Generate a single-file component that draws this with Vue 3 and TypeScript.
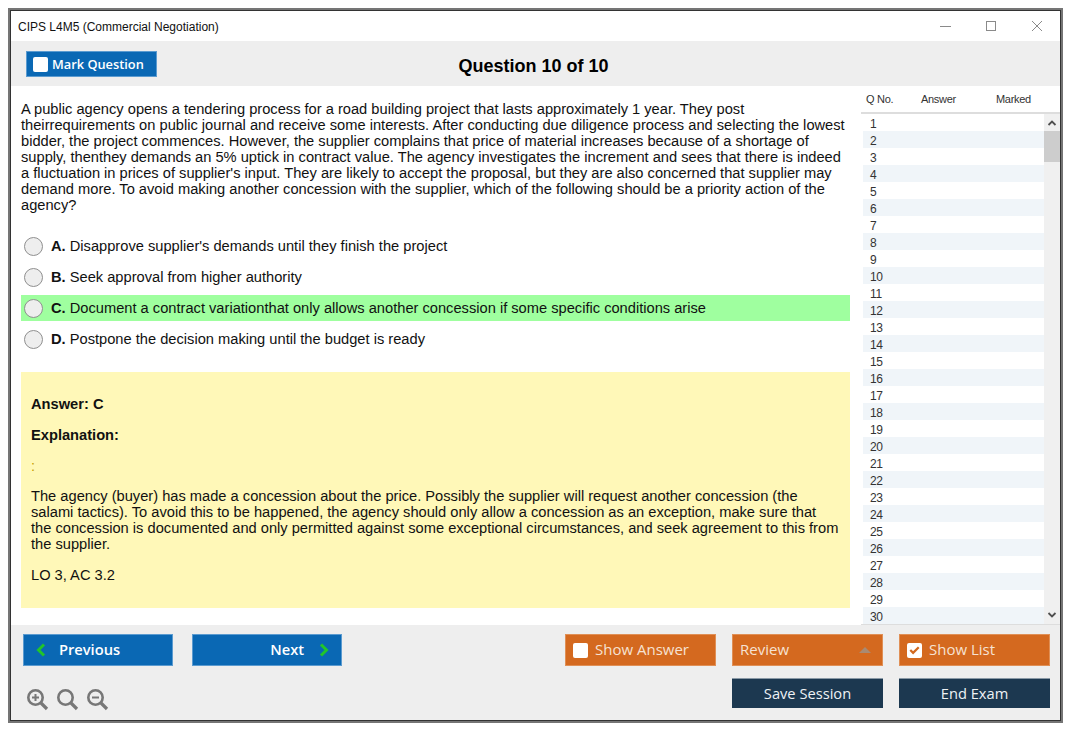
<script setup lang="ts">
const rows: number[] = Array.from({ length: 30 }, (_, i) => i + 1)
const options = [
  { key: 'A.', text: "Disapprove supplier's demands until they finish the project", ok: false },
  { key: 'B.', text: 'Seek approval from higher authority', ok: false },
  { key: 'C.', text: 'Document a contract variationthat only allows another concession if some specific conditions arise', ok: true },
  { key: 'D.', text: 'Postpone the decision making until the budget is ready', ok: false },
]
</script>

<template>
  <div class="win">
    <header class="titlebar">
      <span class="title">CIPS L4M5 (Commercial Negotiation)</span>
      <div class="controls">
        <svg width="12" height="12" viewBox="0 0 12 12"><path d="M1 6.500h11" stroke="#8a8a8a" fill="none" /></svg>
        <svg width="12" height="12" viewBox="0 0 12 12"><rect x="1.500" y="1.500" width="9" height="9" stroke="#8a8a8a" fill="none" /></svg>
        <svg width="12" height="12" viewBox="0 0 12 12"><path d="M1 1l10 10M11 1L1 11" stroke="#8a8a8a" fill="none" /></svg>
      </div>
    </header>

    <div class="toolbar">
      <button class="btn blue mark"><span class="box"></span>Mark Question</button>
      <h1 class="qtitle">Question 10 of 10</h1>
    </div>

    <div class="body">
      <main class="main">
        <p class="question">A public agency opens a tendering process for a road building project that lasts approximately 1 year. They post theirrequirements on public journal and receive some interests. After conducting due diligence process and selecting the lowest bidder, the project commences. However, the supplier complains that price of material increases because of a shortage of supply, thenthey demands an 5% uptick in contract value. The agency investigates the increment and sees that there is indeed a fluctuation in prices of supplier's input. They are likely to accept the proposal, but they are also concerned that supplier may demand more. To avoid making another concession with the supplier, which of the following should be a priority action of the agency?</p>
        <ul class="options">
          <li v-for="o in options" :key="o.key" class="option" :class="{ ok: o.ok }">
            <span class="radio"></span><b>{{ o.key }}</b>&nbsp;{{ o.text }}
          </li>
        </ul>
        <section class="answer">
          <p class="l1"><b>Answer: C</b></p>
          <p class="l2"><b>Explanation:</b></p>
          <p class="l2 colon">:</p>
          <p class="para">The agency (buyer) has made a concession about the price. Possibly the supplier will request another concession (the salami tactics). To avoid this to be happened, the agency should only allow a concession as an exception, make sure that the concession is documented and only permitted against some exceptional circumstances, and seek agreement to this from the supplier.</p>
          <p class="lo">LO 3, AC 3.2</p>
        </section>
      </main>

      <aside class="side">
        <div class="side-head"><span class="c1">Q No.</span><span class="c2">Answer</span><span class="c3">Marked</span></div>
        <div class="side-body">
          <div class="list">
            <div v-for="n in rows" :key="n" class="row" :class="{ alt: n % 2 === 0 }">{{ n }}</div>
          </div>
          <div class="scroll">
            <svg class="arrow" width="16" height="17" viewBox="0 0 16 17"><path d="M4.500 11L8 7.500l3.500 3.500" stroke="#505050" stroke-width="1.800" fill="none" /></svg>
            <div class="thumb"></div>
            <svg class="arrow bottom" width="16" height="16" viewBox="0 0 16 16"><path d="M4.500 6L8 9.500 11.500 6" stroke="#505050" stroke-width="1.800" fill="none" /></svg>
          </div>
        </div>
      </aside>
    </div>

    <footer class="footer">
      <div class="foot-left">
        <div class="nav">
          <button class="btn blue navbtn prev">
            <svg width="12" height="16" viewBox="0 0 12 16"><path d="M9 2.500L3.500 8 9 13.500" stroke="#22c52a" stroke-width="3" fill="none" /></svg>
            <span class="lift">Previous</span>
          </button>
          <button class="btn blue navbtn next">
            <span class="lift">Next</span>
            <svg width="12" height="16" viewBox="0 0 12 16"><path d="M3 2.500L8.500 8 3 13.500" stroke="#22c52a" stroke-width="3" fill="none" /></svg>
          </button>
        </div>
        <div class="zoom">
          <svg width="22" height="22" viewBox="0 0 22 22"><circle cx="8.500" cy="8.500" r="7.200" stroke="#777" stroke-width="2.600" fill="none" /><path d="M14 14L20 20" stroke="#777" stroke-width="3.200" /><path d="M5 8.500h7M8.500 5v7" stroke="#777" stroke-width="2" /></svg>
          <svg width="22" height="22" viewBox="0 0 22 22"><circle cx="8.500" cy="8.500" r="7.200" stroke="#777" stroke-width="2.600" fill="none" /><path d="M14 14L20 20" stroke="#777" stroke-width="3.200" /></svg>
          <svg width="22" height="22" viewBox="0 0 22 22"><circle cx="8.500" cy="8.500" r="7.200" stroke="#777" stroke-width="2.600" fill="none" /><path d="M14 14L20 20" stroke="#777" stroke-width="3.200" /><path d="M5 8.500h7" stroke="#777" stroke-width="2" /></svg>
        </div>
      </div>
      <div class="foot-right">
        <button class="btn orange"><span class="box"></span><span class="lift">Show Answer</span></button>
        <button class="btn orange review"><span class="lift">Review</span><span class="caret"></span></button>
        <button class="btn orange">
          <span class="box">
            <svg width="16" height="16" viewBox="0 0 16 16"><path d="M3.500 8l3 3 6-6" stroke="#d2691f" stroke-width="2.400" fill="none" /></svg>
          </span><span class="lift">Show List</span>
        </button>
        <span></span>
        <button class="btn navy"><span class="lift">Save Session</span></button>
        <button class="btn navy"><span class="lift">End Exam</span></button>
      </div>
    </footer>
  </div>
</template>

<style>
html, body { margin: 0; background: #fff; }
</style>

<style scoped>
.win {
  box-sizing: border-box;
  width: 1055px;
  height: 715px;
  margin: 8px 0 0 8px;
  border: 2px solid #757575;
  outline: 1px solid #333;
  outline-offset: -3px;
  padding: 1px;
  display: flex;
  flex-direction: column;
  background: #fff;
  font-family: "Liberation Sans", Arial, sans-serif;
  color: #111;
}
.titlebar {
  height: 30px;
  flex: none;
  display: flex;
  align-items: center;
  justify-content: space-between;
  padding-left: 7px;
}
.title { font-size: 12px; color: #111; position: relative; top: 1px; }
.controls { display: flex; gap: 34px; padding-right: 17px; }
.toolbar {
  height: 45px;
  flex: none;
  background: #eee;
  position: relative;
  display: flex;
  align-items: center;
  justify-content: center;
}
.qtitle {
  margin: 4px 4px 0 0;
  font-size: 18px;
  line-height: 22px;
  font-weight: bold;
  color: #000;
}
.btn {
  border: 0;
  padding: 0;
  margin: 0;
  color: #fff;
  font-family: "Open Sans", sans-serif;
  font-size: 14.670px;
  display: flex;
  align-items: center;
  box-sizing: border-box;
}
.lift { position: relative; top: -1px; }
.blue { background: #0a68b4; border: 1px solid #5b9bd0; }
.orange {
  background: #d4691f;
  color: #f6e2d3;
  width: 151px;
  height: 32px;
  padding-left: 7px;
  gap: 7px;
  font-size: 15px;
  border: 1px solid #e08f55;
}
.navy { background: #1c3850; color: #eef2f5; width: 151px; height: 30px; justify-content: center; border-top: 1px solid #8a99a6; }
.box {
  width: 15px;
  height: 15px;
  background: #fff;
  border-radius: 2px;
  display: inline-flex;
  align-items: center;
  justify-content: center;
  flex: none;
}
.mark {
  position: absolute;
  left: 15px;
  top: 10px;
  width: 131px;
  height: 26px;
  padding-left: 6px;
  gap: 4px;
  font-size: 12.800px;
  font-weight: 600;
}
.body { flex: 1; min-height: 0; display: flex; }
.main { flex: 1; min-width: 0; padding: 15px 11px 0 10px; font-size: 14.670px; }
.question { margin: 0; line-height: 16px; width: 829px; color: #111; }
.options { list-style: none; margin: 20px 0 0; padding: 0; }
.option {
  height: 26px;
  margin-bottom: 5px;
  display: flex;
  align-items: center;
  white-space: pre;
  color: #111;
}
.option.ok { background: #9fff9f; }
.radio {
  box-sizing: border-box;
  width: 19px;
  height: 19px;
  border-radius: 50%;
  border: 1px solid #8f8f8f;
  background: #eeeeee;
  margin: 0 8px 0 3px;
  flex: none;
}
.answer {
  margin-top: 20px;
  height: 236px;
  box-sizing: border-box;
  background: #fff8b8;
  padding: 24px 10px 0;
  line-height: 16px;
}
.answer p { margin: 0; }
.l2 { margin-top: 15px !important; }
.colon { color: #c8a000; }
.para { margin-top: 14px !important; }
.lo { margin-top: 15px !important; }
.side { width: 199px; flex: none; display: flex; flex-direction: column; }
.side-head {
  height: 26px;
  flex: none;
  border-bottom: 2px solid #ddd;
  display: flex;
  align-items: center;
  font-size: 11px;
  letter-spacing: -0.3px;
  color: #333;
}
.c1 { width: 60px; padding-left: 5px; box-sizing: border-box; }
.c2 { width: 75px; }
.side-body { flex: 1; min-height: 0; display: flex; overflow: hidden; border-bottom: 1px solid #ddd; }
.list { width: 181px; margin-left: 2px; flex: none; }
.row {
  height: 17.030px;
  line-height: 21px;
  font-size: 12px;
  letter-spacing: -0.3px;
  padding-left: 7px;
  box-sizing: border-box;
  color: #333;
}
.row.alt { background: #f0f5f9; }
.scroll { flex: 1; background: #f0f0f0; position: relative; }
.arrow { display: block; }
.arrow.bottom { position: absolute; bottom: 1px; left: 0; }
.thumb { height: 31px; background: #cdcdcd; }
.footer {
  height: 95px;
  box-sizing: border-box;
  flex: none;
  background: #eee;
  display: flex;
  justify-content: space-between;
  padding: 9px 10px 0 12px;
}
.nav { display: flex; gap: 19px; }
.navbtn { width: 150px; height: 32px; font-weight: 600; }
.prev { padding-left: 11px; gap: 12px; }
.next { justify-content: flex-end; padding-right: 11px; gap: 14px; }
.zoom { display: flex; gap: 8px; margin-top: 23px; margin-left: 4px; }
.foot-right {
  display: grid;
  grid-template-columns: 151px 151px 151px;
  column-gap: 16px;
  row-gap: 12px;
  align-content: start;
}
.review { justify-content: space-between; padding-right: 11px; }
.caret {
  width: 0;
  height: 0;
  border-left: 6px solid transparent;
  border-right: 6px solid transparent;
  border-bottom: 6px solid #a98a72;
}
</style>
